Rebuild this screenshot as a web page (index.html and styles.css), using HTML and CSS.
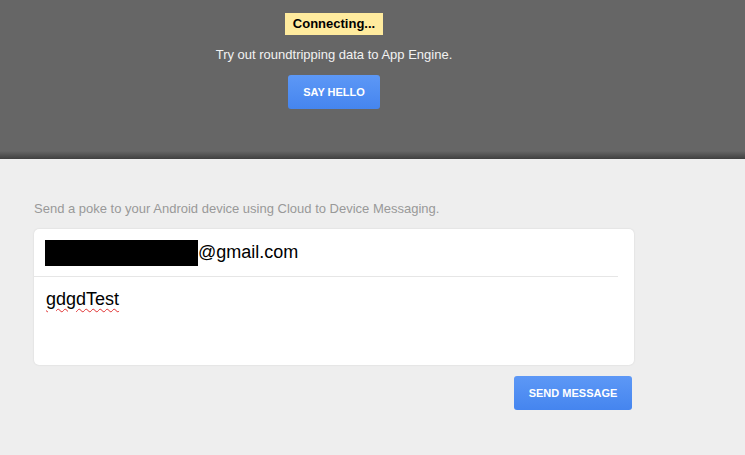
FILE: index.html
```html
<!DOCTYPE html>
<html lang="en">
<head>
    <meta charset="UTF-8">
    <meta name="viewport" content="width=device-width, initial-scale=1.0">
    <title>Cloud to Device Messaging</title>
    <link rel="stylesheet" href="styles.css">
</head>
<body>
    <div class="header">
        <div class="container header-inner">
            <span class="status">Connecting...</span>
            <p class="intro">Try out roundtripping data to App Engine.</p>
            <button class="btn" type="button">Say Hello</button>
        </div>
    </div>

    <div class="container main">
        <p class="hint">Send a poke to your Android device using Cloud to Device Messaging.</p>
        <form class="card">
            <div class="row-email"><span class="redacted"></span>@gmail.com</div>
            <div class="divider"></div>
            <div class="row-message"><span class="misspelled">gdgdTest</span></div>
        </form>
        <div class="actions">
            <button class="btn btn-send" type="button">Send Message</button>
        </div>
    </div>
</body>
</html>
```

FILE: styles.css
```css
body {
    margin: 0;
    padding: 0;
    background-color: #eeeeee;
    font-family: "Liberation Sans", Arial, sans-serif;
    color: #000;
}
.container {
    width: 600px;
    margin-left: 34px;
}
.header {
    height: 159px;
    background: linear-gradient(to bottom, #666666 0, #666666 151px, #3f3f3f 159px);
}
.header-inner {
    padding-top: 13px;
    display: flex;
    flex-direction: column;
    align-items: center;
}
.status {
    display: inline-block;
    background-color: #ffeb9e;
    font-size: 13px;
    font-weight: bold;
    line-height: 22px;
    padding: 0 8px;
}
.intro {
    margin: 12px 0 12px;
    font-size: 13px;
    line-height: 16px;
    color: #f2f2f2;
}
.btn {
    height: 34px;
    padding: 0 15px;
    border: none;
    border-radius: 3px;
    background: linear-gradient(to bottom, #5d98f6, #4585ef);
    color: #fff;
    font-family: "Liberation Sans", Arial, sans-serif;
    font-size: 11px;
    font-weight: bold;
    text-transform: uppercase;
    cursor: pointer;
}
.main {
    padding-top: 42px;
}
.hint {
    margin: 0 0 13px;
    font-size: 13px;
    line-height: 15px;
    color: #999999;
}
.card {
    background-color: #fff;
    border-radius: 5px;
    box-shadow: 0 0 2px rgba(0, 0, 0, 0.12);
    height: 136px;
}
.row-email {
    height: 47px;
    padding-left: 11px;
    display: flex;
    align-items: center;
    font-size: 18px;
}
.redacted {
    display: inline-block;
    width: 153px;
    height: 26px;
    background-color: #000;
}
.divider {
    height: 1px;
    margin-right: 16px;
    background-color: #e6e6e6;
}
.row-message {
    padding: 12px 0 0 12px;
    font-size: 18px;
    line-height: 21px;
}
.misspelled {
    text-decoration: underline wavy #e03030;
    text-decoration-thickness: 1px;
    text-underline-offset: 3px;
}
.actions {
    display: flex;
    justify-content: flex-end;
    padding: 11px 2px 0 0;
}
.btn-send {
    width: 118px;
    padding: 0;
}
```
